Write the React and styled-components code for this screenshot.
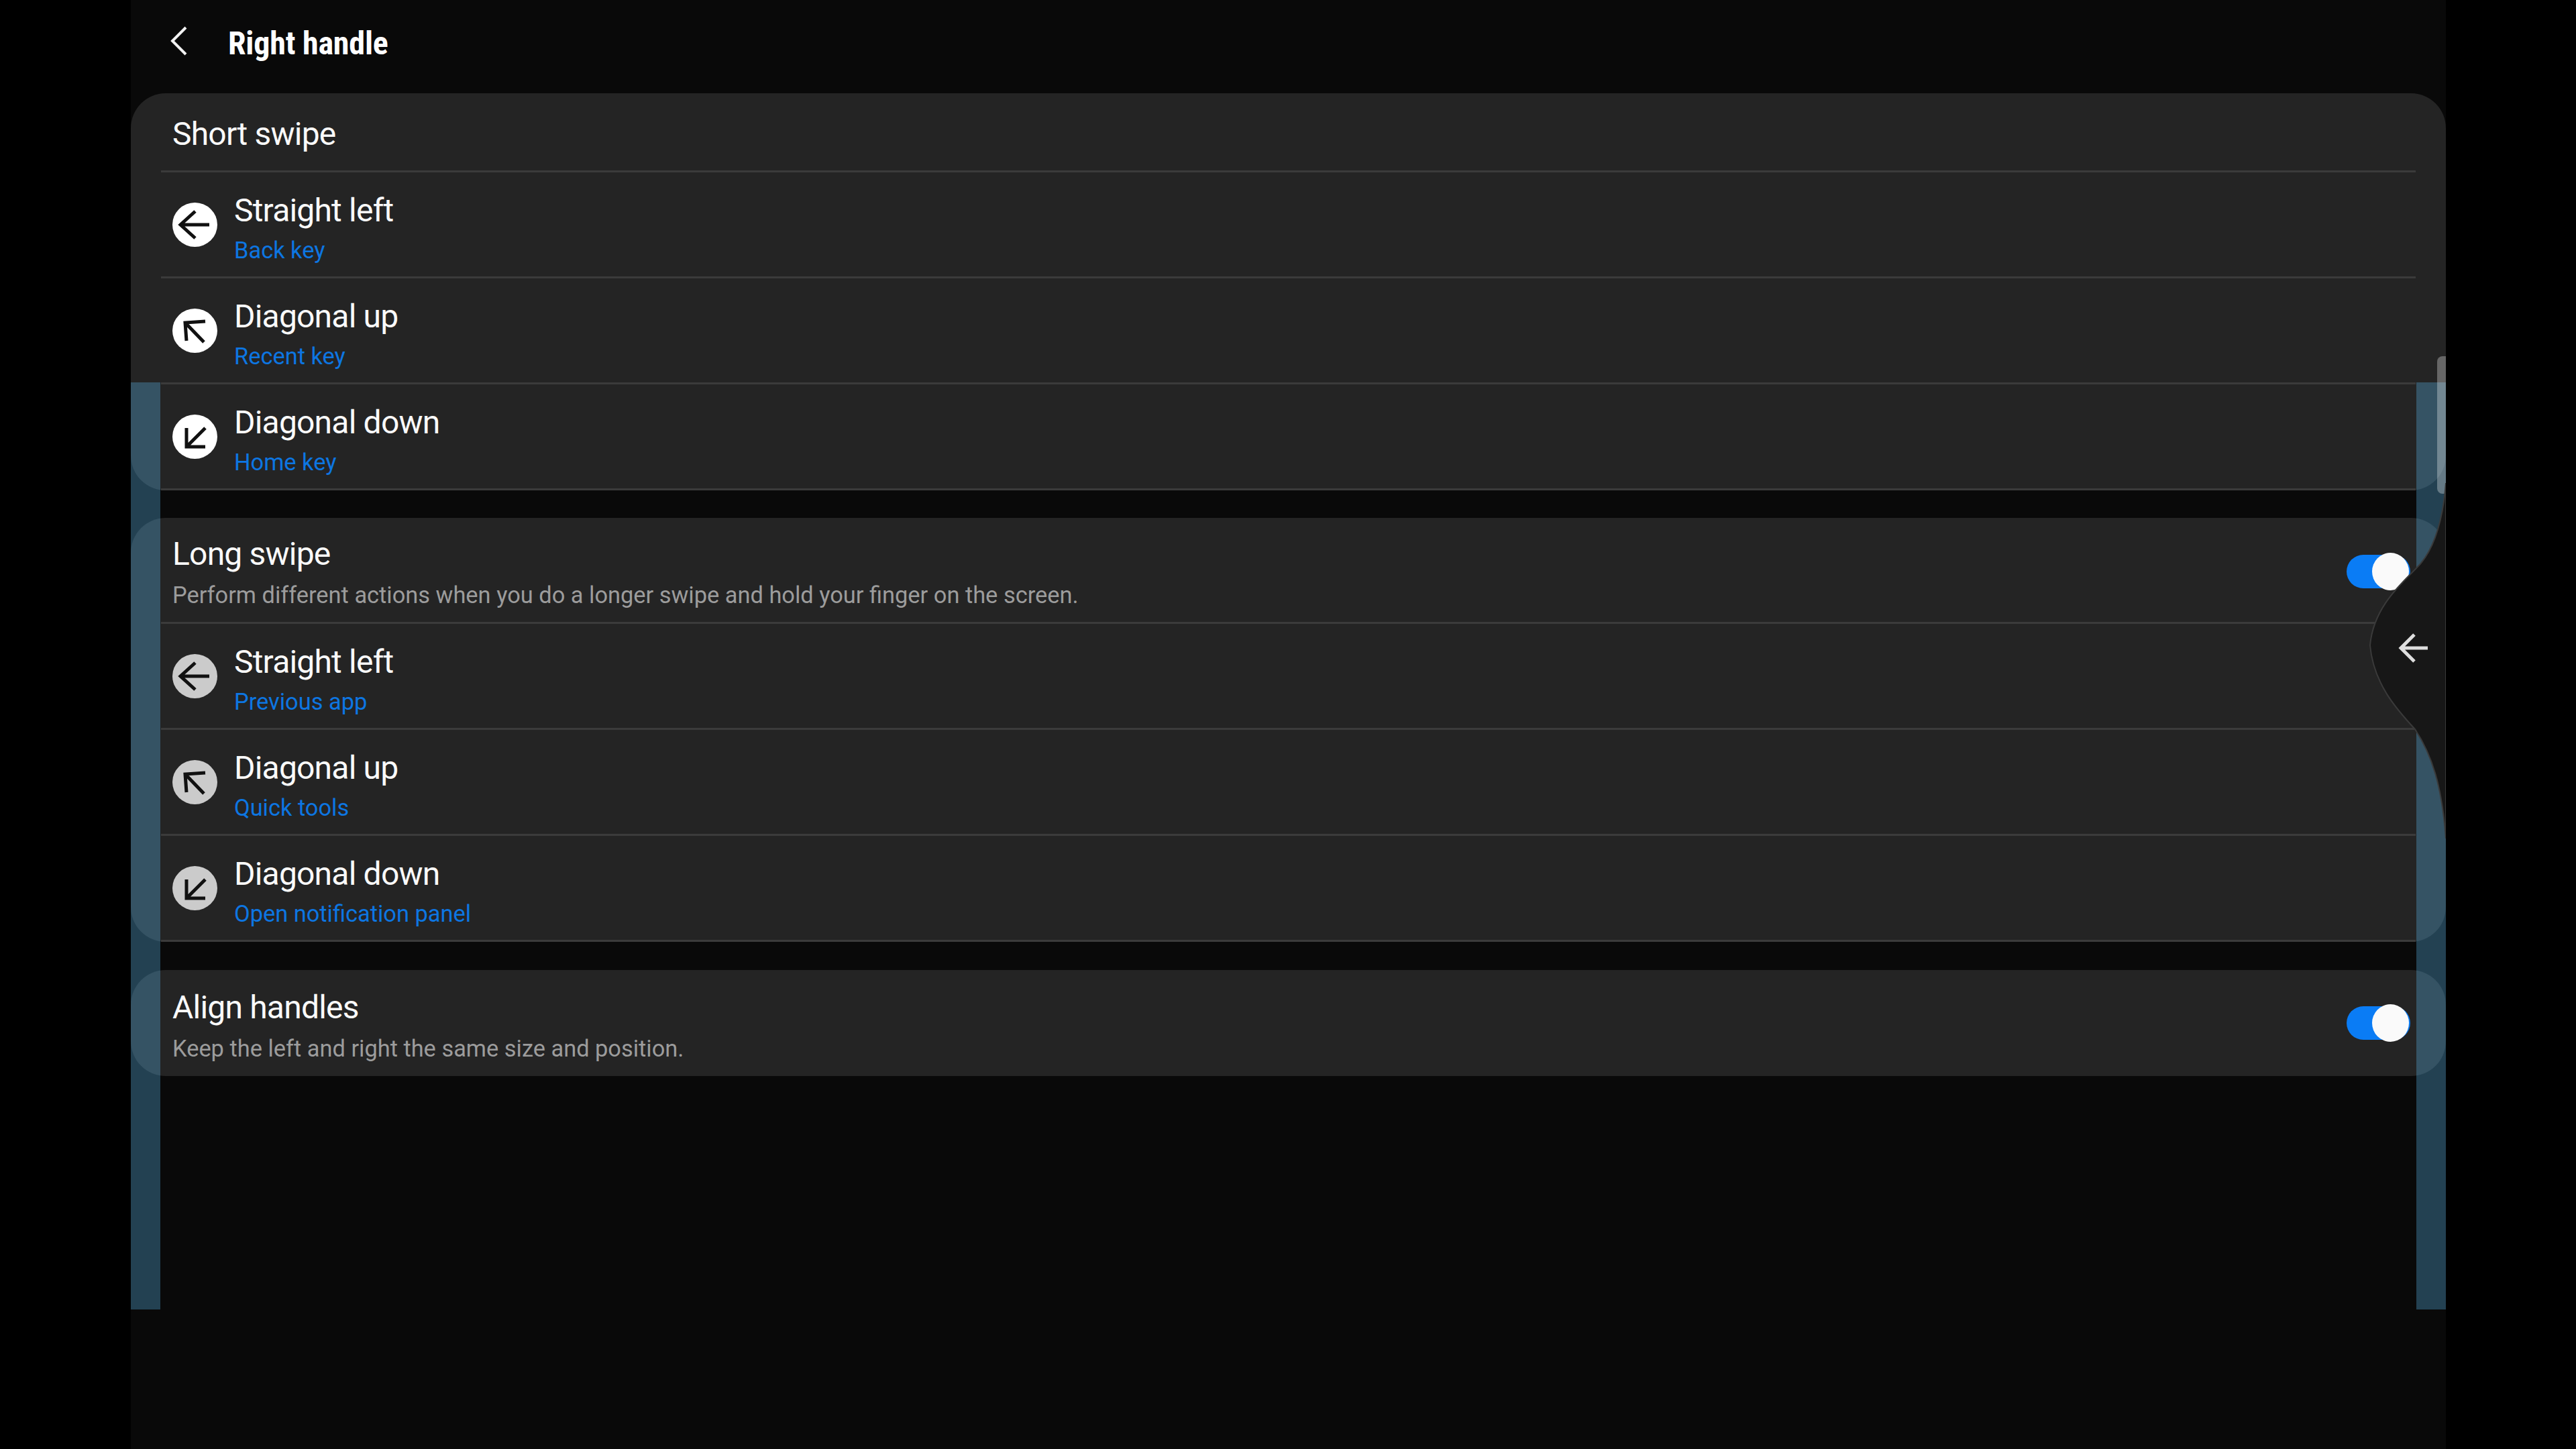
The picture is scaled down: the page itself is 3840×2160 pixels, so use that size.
import styled, { createGlobalStyle } from "styled-components";

const GlobalStyle = createGlobalStyle`
    html, body {
        margin: 0;
        padding: 0;
        background: #000;
    }
`
const Screen = styled.main`
    position: relative;
    box-sizing: border-box;
    width: 3451px;
    height: 2160px;
    margin-left: 195px;
    overflow: hidden;
    background: #090909;
    font-family: Roboto, "Liberation Sans", sans-serif;
    color: #fafafa;
`
const TopBar = styled.header`
    display: flex;
    align-items: center;
    height: 139px;
    padding: 0 0 8px 58px;
    box-sizing: border-box;
`
const BackButton = styled.svg`
    width: 28px;
    height: 44px;
    margin-right: 59px;
    margin-top: -10px;
`
const Title = styled.h1`
    margin: 0;
    margin-top: -2px;
    font-size: 48px;
    font-weight: 700;
    font-stretch: 75%;
    letter-spacing: -0.2px;
    color: #fff;
`
const Card = styled.section`
    margin-bottom: ${p => p.$gap || 41}px;
    padding: 0 45px;
    background: #242424;
    border-radius: 52px;
`
const Row = styled.div`
    display: flex;
    align-items: center;
    box-sizing: border-box;
    height: ${p => p.$height || 158}px;
    padding: 0 8px 0 17px;
    border-bottom: ${p => p.$last ? "none" : "3px solid #3b3b3b"};
`
const Heading = styled.h2`
    margin: ${p => p.$top || 5}px 0 0;
    font-size: 48px;
    font-weight: 400;
    letter-spacing: -0.8px;
`
const Summary = styled.p`
    margin: 13px 0 0;
    font-size: 34.4px;
    color: #9c9c9c;
`
const TextBlock = styled.div`
    flex: 1;
`
const Label = styled.div`
    margin-top: 8px;
    font-size: 48px;
    letter-spacing: -0.8px;
    line-height: 58px;
`
const Value = styled.div`
    margin-top: 10px;
    font-size: 34.4px;
    line-height: 40px;
    color: #0d76e2;
`
const IconCircle = styled.div`
    display: flex;
    align-items: center;
    justify-content: center;
    flex: none;
    width: 67px;
    height: 66px;
    margin-top: 1px;
    margin-right: 25px;
    border-radius: 50%;
    background: ${p => p.$dim ? "#cbcbcb" : "#fff"};
`
const Arrow = styled.svg`
    width: 66px;
    height: 66px;
    fill: none;
    stroke: #111;
    stroke-width: 5;
`
const Toggle = styled.div`
    position: relative;
    flex: none;
    width: 95px;
    height: 50px;
    margin-top: ${p => p.$last ? 0 : 4}px;
    border-radius: 25px;
    background: #0a7cf5;
`
const Thumb = styled.span`
    position: absolute;
    top: -3px;
    right: 2px;
    width: 55px;
    height: 56px;
    border-radius: 50%;
    background: #fafafa;
`
const Strip = styled.div`
    position: absolute;
    top: 570px;
    bottom: 208px;
    ${p => p.$side}: 0;
    width: 44px;
    background: rgba(85, 172, 222, 0.35);
`
const Scrollbar = styled.div`
    position: absolute;
    top: 531px;
    right: 0;
    width: 13px;
    height: 205px;
    border-radius: 8px 0 0 8px;
    background: rgba(255, 255, 255, 0.3);
`
const Handle = styled.svg`
    position: absolute;
    top: 720px;
    right: 0;
    width: 126px;
    height: 530px;
`

const arrows = {
    left: "M21 0H-22M0 -20L-22 0L0 20",
    up: "M15 -14L-15 -12L-13 15M-15 -12L13 17",
    down: "M15 15H-13V-13M-13 15L15 -13",
}

const ArrowIcon = ({ dir, dim }) => (
    <IconCircle $dim={dim}>
        <Arrow viewBox="-33 -33 66 66">
            <path d={arrows[dir]} />
        </Arrow>
    </IconCircle>
)

const ActionRow = ({ dir, dim, label, value }) => (
    <Row>
        <ArrowIcon dir={dir} dim={dim} />
        <TextBlock>
            <Label>{label}</Label>
            <Value>{value}</Value>
        </TextBlock>
    </Row>
)

const SwitchRow = ({ title, summary, last }) => (
    <Row $last={last}>
        <TextBlock>
            <Heading>{title}</Heading>
            <Summary>{summary}</Summary>
        </TextBlock>
        <Toggle $last={last}><Thumb /></Toggle>
    </Row>
)

export default function App() {
    return (
        <Screen>
            <GlobalStyle />
            <TopBar>
                <BackButton viewBox="0 0 28 44" fill="none" stroke="#f2f2f2" strokeWidth="4">
                    <path d="M24 2L4 22L24 42" />
                </BackButton>
                <Title>Right handle</Title>
            </TopBar>
            <Card>
                <Row $height={118}>
                    <Heading $top={6}>Short swipe</Heading>
                </Row>
                <ActionRow dir="left" label="Straight left" value="Back key" />
                <ActionRow dir="up" label="Diagonal up" value="Recent key" />
                <ActionRow dir="down" label="Diagonal down" value="Home key" />
            </Card>
            <Card $gap={42}>
                <SwitchRow
                    title="Long swipe"
                    summary="Perform different actions when you do a longer swipe and hold your finger on the screen."
                />
                <ActionRow dim dir="left" label="Straight left" value="Previous app" />
                <ActionRow dim dir="up" label="Diagonal up" value="Quick tools" />
                <ActionRow dim dir="down" label="Diagonal down" value="Open notification panel" />
            </Card>
            <Card>
                <SwitchRow
                    last
                    title="Align handles"
                    summary="Keep the left and right the same size and position."
                />
            </Card>
            <Strip $side="left" />
            <Strip $side="right" />
            <Scrollbar />
            <Handle viewBox="0 0 126 530">
                <path
                    d="M126 0C122 50 110 100 82 127C60 150 18 185 13 242C18 300 55 340 80 367C105 405 120 450 126 530Z"
                    fill="#171717"
                    stroke="#3a3a3a"
                    strokeWidth="2"
                />
                <path d="M99 246H60M79 226L59 246L79 266" fill="none" stroke="#dedede" strokeWidth="5" />
            </Handle>
        </Screen>
    )
}
